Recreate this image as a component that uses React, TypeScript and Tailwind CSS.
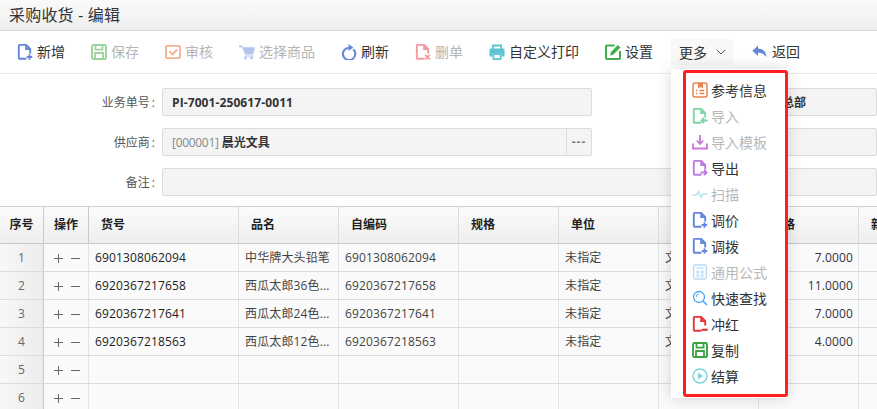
import React from "react";
import { ChevronDown } from "lucide-react";

type IP = { c: string };
const Svg = ({ children, size = 16 }: { children: React.ReactNode; size?: number }) => (
  <svg width={size} height={size} viewBox="0 0 16 16" fill="none" className="shrink-0">
    {children}
  </svg>
);

const FileIcon = ({ c, badge }: IP & { badge: "plus" | "x" | "minus" | "left" | "right" | "none" }) => (
  <Svg>
    <path d="M9.5 14.8H2.8a1 1 0 0 1-1-1V1.9a1 1 0 0 1 1-1h6.4l4 4v4.6" stroke={c} strokeWidth="1.9" strokeLinejoin="round" />
    <path d="M8.2 1v5h5.5z" fill={c} />
    {badge === "plus" && <path d="M12.5 10.3v5.4M9.8 13h5.4" stroke={c} strokeWidth="1.8" />}
    {badge === "x" && <path d="M10.3 10.8l4.6 4.6M14.9 10.8l-4.6 4.6" stroke={c} strokeWidth="1.8" />}
    {badge === "minus" && <path d="M9.5 13.8h6.2" stroke={c} strokeWidth="2.2" />}
    {badge === "left" && <path d="M15.7 12.5H9.5M12.2 9.8l-2.8 2.7 2.8 2.7" stroke={c} strokeWidth="1.8" />}
    {badge === "right" && <path d="M8.5 12.5h6.2M12 9.8l2.8 2.7L12 15.2" stroke={c} strokeWidth="1.8" />}
  </Svg>
);
const Floppy = ({ c }: IP) => (
  <Svg>
    <rect x="1" y="1" width="14" height="14" rx="1.6" stroke={c} strokeWidth="1.9" />
    <path d="M4.5 1.5v4.2h7V1.5M4 14.5V9h8v5.5" stroke={c} strokeWidth="1.8" />
  </Svg>
);
const CheckBox = ({ c }: IP) => (
  <Svg>
    <rect x="1" y="1.8" width="14" height="12.4" rx="1.5" stroke={c} strokeWidth="1.8" />
    <path d="M4.3 7.3L7.5 10.5 12.2 5.5" stroke={c} strokeWidth="1.9" />
  </Svg>
);
const Cart = ({ c }: IP) => (
  <Svg>
    <path d="M0 1.5h3.2l.8 1.7H16l-2 7.3H6.2L3 3.3H0z" fill={c} />
    <path d="M5.5 12h9" stroke={c} strokeWidth="1" />
    <circle cx="6.5" cy="14" r="1.4" fill={c} />
    <circle cx="12.5" cy="14" r="1.4" fill={c} />
  </Svg>
);
const Refresh = ({ c }: IP) => (
  <Svg>
    <path d="M12.2 5.2A6.2 6.2 0 1 1 7.8 3.7" stroke={c} strokeWidth="2.1" />
    <path d="M7.5 0v7L12.3 3.5z" fill={c} />
  </Svg>
);
const Printer = ({ c }: IP) => (
  <Svg>
    <path d="M3.8 5.5V1.5h8.4v4" stroke={c} strokeWidth="1.8" />
    <path d="M1.5 4.5h13a1 1 0 0 1 1 1V12.5h-3V9.5h-9v3h-3v-7a1 1 0 0 1 1-1z" fill={c} />
    <path d="M4.4 10.2h7.2v5H4.4z" stroke={c} strokeWidth="1.7" />
  </Svg>
);
const Pen = ({ c }: IP) => (
  <Svg>
    <path d="M9.5 1.5H2a1 1 0 0 0-1 1V14a1 1 0 0 0 1 1h12a1 1 0 0 0 1-1V7" stroke={c} strokeWidth="2" />
    <path d="M5 11.5l1-3.4L12.8 1 15.5 3.6 8.4 10.5z" fill={c} />
  </Svg>
);
const Back = ({ c }: IP) => (
  <Svg>
    <path d="M6 1.5L.5 6.8 6 12V8.8c3.6 0 6 1 8.5 4.5C14.2 8 11.5 4.8 6 4.6z" fill={c} />
  </Svg>
);
const Ref = ({ c }: IP) => (
  <Svg>
    <rect x="1" y="1" width="14" height="14" rx="2" stroke={c} strokeWidth="1.5" />
    <path d="M6 1h5v5.5L8.5 5 6 6.5z" fill={c} />
    <path d="M3.8 8.5h1.6M3.8 11.5h1.6M7.5 8.5h4.7M7.5 11.5h4.7" stroke={c} strokeWidth="1.4" />
  </Svg>
);
const Download = ({ c }: IP) => (
  <Svg>
    <path d="M1 9.5v5h14v-5" stroke={c} strokeWidth="1.8" />
    <path d="M8 1v8.5M4.8 6.5L8 10l3.2-3.5" stroke={c} strokeWidth="1.8" />
  </Svg>
);
const Pulse = ({ c }: IP) => (
  <Svg>
    <path d="M.5 9h4L6.5 5.5 9 11l2-3h4.5" stroke={c} strokeWidth="1.6" />
  </Svg>
);
const Calc = ({ c }: IP) => (
  <Svg>
    <rect x="1.7" y="1" width="12.6" height="14" rx="1.5" stroke={c} strokeWidth="1.3" />
    <path d="M4.5 4h7" stroke={c} strokeWidth="1.3" />
    <path d="M4.8 7h2v2h-2zM9.2 7h2v2h-2zM4.8 10.8h2v2h-2zM9.2 10.8h2v2h-2z" stroke={c} strokeWidth="1" />
  </Svg>
);
const Search = ({ c }: IP) => (
  <Svg>
    <circle cx="7" cy="7" r="5.5" stroke={c} strokeWidth="1.3" />
    <path d="M11 11l4 4" stroke={c} strokeWidth="1.6" />
    <path d="M4.3 6.8A2.8 2.8 0 0 1 7 4" stroke={c} strokeWidth="1" />
  </Svg>
);
const Play = ({ c }: IP) => (
  <Svg>
    <circle cx="8" cy="8" r="7" stroke={c} strokeWidth="1.5" />
    <path d="M6 4.8v6.4L11.2 8z" fill={c} />
  </Svg>
);

const BLUE = "#6586da";
const ToolBtn = ({ icon, label, muted }: { icon: React.ReactNode; label: string; muted?: boolean }) => (
  <div className={`flex items-center gap-[4px] text-[14px] leading-[20px] ${muted ? "text-[#b5b5b5]" : "text-[#333]"}`}>
    {icon}
    <span>{label}</span>
  </div>
);

const menu: { icon: React.ReactNode; label: string; muted?: boolean }[] = [
  { icon: <Ref c="#e8834f" />, label: "参考信息" },
  { icon: <FileIcon c="#7bd8a8" badge="left" />, label: "导入", muted: true },
  { icon: <Download c="#c878dc" />, label: "导入模板", muted: true },
  { icon: <FileIcon c="#c07ae0" badge="right" />, label: "导出" },
  { icon: <Pulse c="#b4e6ea" />, label: "扫描", muted: true },
  { icon: <FileIcon c={BLUE} badge="plus" />, label: "调价" },
  { icon: <FileIcon c={BLUE} badge="plus" />, label: "调拨" },
  { icon: <Calc c="#b7d9f5" />, label: "通用公式", muted: true },
  { icon: <Search c="#45a5f2" />, label: "快速查找" },
  { icon: <FileIcon c="#e8343c" badge="minus" />, label: "冲红" },
  { icon: <Floppy c="#3aa53f" />, label: "复制" },
  { icon: <Play c="#7fd4dc" />, label: "结算" },
];

const cols = [
  "w-[44px]",
  "w-[45px]",
  "w-[150px]",
  "w-[100px]",
  "w-[120px]",
  "w-[100px]",
  "w-[100px]",
  "w-[100px]",
  "w-[100px]",
  "w-[120px]",
];
const headers = ["序号", "操作", "货号", "品名", "自编码", "规格", "单位", "", "价格", "新价"];

const rows = [
  ["6901308062094", "中华牌大头铅笔", "6901308062094", "", "未指定", "文具", "7.0000"],
  ["6920367217658", "西瓜太郎36色...", "6920367217658", "", "未指定", "文具", "11.0000"],
  ["6920367217641", "西瓜太郎24色...", "6920367217641", "", "未指定", "文具", "7.0000"],
  ["6920367218563", "西瓜太郎12色...", "6920367218563", "", "未指定", "文具", "4.0000"],
  ["", "", "", "", "", "", ""],
  ["", "", "", "", "", "", ""],
];

const Field = ({ children, className = "" }: { children?: React.ReactNode; className?: string }) => (
  <div className={`h-[28px] flex items-center bg-[#f4f4f4] border border-[#dcdcdc] rounded-[2px] pl-[9px] text-[12px] ${className}`}>
    {children}
  </div>
);
const Label = ({ children }: { children: React.ReactNode }) => (
  <div className="w-[155px] pt-[2px] text-right text-[12px] text-[#555] shrink-0 mr-[7px]">
    {children}
    <span className="ml-[2px]">:</span>
  </div>
);

export default function App() {
  return (
    <div
      className="relative w-[877px] h-[409px] overflow-hidden bg-white text-[#333]"
      style={{ fontFamily: '"Open Sans","Noto Sans CJK SC",sans-serif' }}
    >
      <div className="h-[31px] pl-[9px] flex items-center text-[16px] leading-[28px] tracking-[0.2px] text-[#333] bg-gradient-to-b from-[#fafafa] to-[#eeeeee] border-b border-[#d8d8d8]">
        采购收货 - 编辑
      </div>

      <div className="h-[43px] pl-[17px] flex items-center gap-[26px] border-b border-[#ececec]">
        <ToolBtn icon={<FileIcon c={BLUE} badge="plus" />} label="新增" />
        <ToolBtn icon={<Floppy c="#9dd39f" />} label="保存" muted />
        <ToolBtn icon={<CheckBox c="#f3b08f" />} label="审核" muted />
        <ToolBtn icon={<Cart c="#b3c3ec" />} label="选择商品" muted />
        <ToolBtn icon={<Refresh c={BLUE} />} label="刷新" />
        <ToolBtn icon={<FileIcon c="#f29aa0" badge="x" />} label="删单" muted />
        <ToolBtn icon={<Printer c="#5cc4d2" />} label="自定义打印" />
        <ToolBtn icon={<Pen c="#3fae4b" />} label="设置" />
        <div className="-ml-[8px] -mr-[7px] w-[62px] h-[26px] pl-[8px] flex items-center gap-[6px] bg-[#f8f8f8] text-[14px] rounded-[2px]">
          <span>更多</span>
          <ChevronDown size={16} strokeWidth={1.5} color="#555" />
        </div>
        <ToolBtn icon={<Back c={BLUE} />} label="返回" />
      </div>

      <div className="pt-[14px] h-[132px] flex flex-col gap-[12px]">
        <div className="flex items-center">
          <Label>业务单号</Label>
          <Field className="w-[430px] font-bold tracking-[0.1px]"><span className="pt-[2px]">PI-7001-250617-0011</span></Field>
          <Field className="w-[105px] ml-auto font-bold"><span className="pt-[2px]">总部</span></Field>
        </div>
        <div className="flex items-center">
          <Label>供应商</Label>
          <Field className="w-[430px] pr-0">
            <span className="pt-[2px] text-[#888] tracking-[-0.3px]">[000001]</span>
            <span className="pt-[2px] ml-[3px] font-bold">晨光文具</span>
            <span className="ml-auto h-full w-[25px] border-l border-[#dcdcdc] flex items-center justify-center text-[#777] tracking-[1px] font-bold leading-none">
              ---
            </span>
          </Field>
          <Field className="w-[105px] ml-auto" />
        </div>
        <div className="flex items-center">
          <Label>备注</Label>
          <Field className="flex-1" />
        </div>
      </div>

      <div className="w-[979px]">
        <div className="flex h-[38px] border-t border-b border-t-[#d0d0d0] border-b-[#c4c8d0] bg-gradient-to-b from-[#fbfbfb] to-[#eeeeee] font-bold text-[12px] text-[#222]">
          {headers.map((h, i) => (
            <div
              key={i}
              className={`${cols[i]} shrink-0 flex items-center border-r ${i < 2 ? "justify-center border-[#c9c9c9]" : "pl-[12px] border-[#dcdcdc]"}`}
            >
              {h}
            </div>
          ))}
        </div>
        {rows.map((r, idx) => (
          <div key={idx} className="flex h-[28px] border-b border-[#d9dce2] bg-[#fafafa] text-[12px] text-[#444]">
            <div className={`${cols[0]} shrink-0 pt-px flex items-center justify-center border-r border-[#c9c9c9] bg-gradient-to-r from-[#f8f8f8] to-[#ececec] text-[#666]`}>
              {idx + 1}
            </div>
            <div className={`${cols[1]} shrink-0 pt-px pl-px flex items-center justify-center gap-[8px] border-r border-[#dfe3ea] text-[#666]`}>
              <svg width="9" height="9" viewBox="0 0 9 9"><path d="M4.5 0v9M0 4.5h9" stroke="#666" strokeWidth="1" /></svg>
              <svg width="9" height="9" viewBox="0 0 9 9"><path d="M0 4.5h9" stroke="#666" strokeWidth="1" /></svg>
            </div>
            {r.map((v, i) => (
              <div
                key={i}
                className={`${cols[i + 2]} shrink-0 pt-px flex items-center border-r border-[#dfe3ea] ${i === 6 ? "justify-end pr-[5px] text-[#334]" : "px-[6px]"} ${i === 0 ? "text-[#222]" : ""}`}
              >
                <span className="whitespace-nowrap overflow-hidden tracking-[0.14px]">{v}</span>
              </div>
            ))}
            <div className={`${cols[9]} shrink-0 border-r border-[#dfe3ea]`} />
          </div>
        ))}
      </div>

      <div className="absolute left-[671px] top-[69px] w-[116px] h-[329px] bg-white pt-[8px] pl-[21px] shadow-[0_0_14px_rgba(0,0,0,0.16)]">
        {menu.map((m) => (
          <div key={m.label} className={`h-[26px] flex items-center gap-[3px] text-[14px] ${m.muted ? "text-[#b8b8b8]" : "text-[#333]"}`}>
            {m.icon}
            <span>{m.label}</span>
          </div>
        ))}
        <div className="absolute left-[12px] right-[-1px] top-[1px] bottom-[1px] border-[3px] border-[#ff1f1f] rounded-[3px]" />
      </div>
    </div>
  );
}
